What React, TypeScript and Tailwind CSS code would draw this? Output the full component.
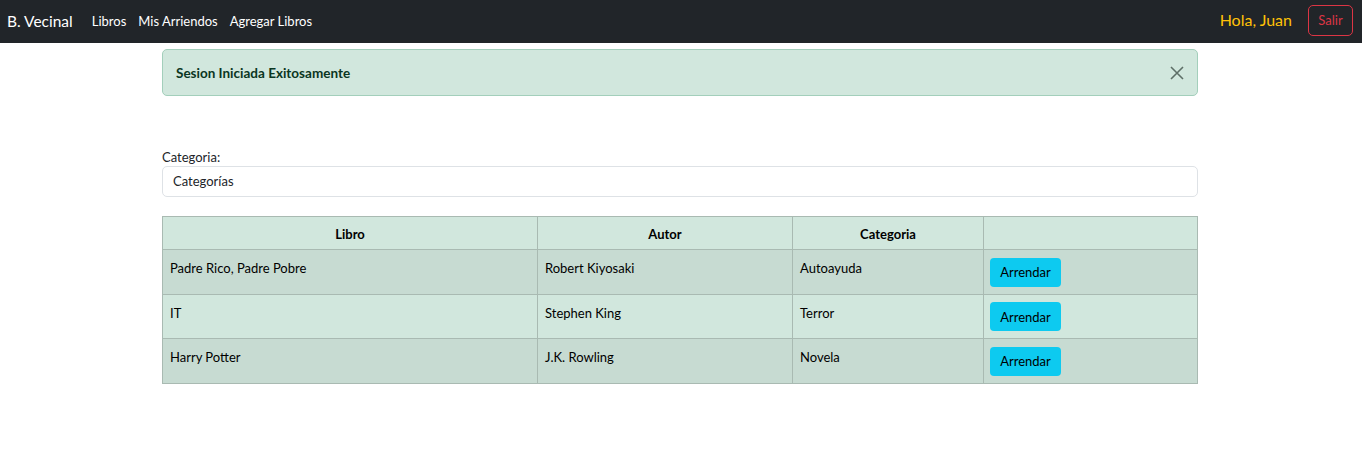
import React from "react";

const rows = [
  ["Padre Rico, Padre Pobre", "Robert Kiyosaki", "Autoayuda"],
  ["IT", "Stephen King", "Terror"],
  ["Harry Potter", "J.K. Rowling", "Novela"],
];

export default function App() {
  return (
    <div className="min-h-[460px] bg-white text-[13px] text-[#212529]" style={{ fontFamily: 'Lato, "Open Sans", sans-serif' }}>
      <nav className="h-[43px] bg-[#212529] flex items-center pl-[7px] pr-[9px]">
        <span className="text-white text-[15.5px] mr-[19px]">B. Vecinal</span>
        <div className="flex gap-[12px] text-white text-[13px]">
          <span>Libros</span>
          <span>Mis Arriendos</span>
          <span>Agregar Libros</span>
        </div>
        <div className="ml-auto flex items-center">
          <span className="text-[#ffc107] text-[16px] mr-[16px] -mt-[4px]">Hola, Juan</span>
          <button className="h-[31px] w-[45px] border border-[#dc3545] rounded-[5px] text-[#dc3545] text-[13px] -mt-[2px]">Salir</button>
        </div>
      </nav>
      <div className="w-[1036px] ml-[162px] pt-[6px]">
        <div className="h-[47px] bg-[#d1e7dd] border border-[#a3cfbb] rounded-[5px] flex items-center pl-[13px] pr-[13px] text-[#0a3622] font-bold text-[13.5px]">
          <span className="mt-[2px]">Sesion Iniciada Exitosamente</span>
          <svg className="ml-auto" width="14" height="14" viewBox="0 0 14 14">
            <path d="M1 1L13 13M13 1L1 13" stroke="#5e6f67" strokeWidth="1.6" />
          </svg>
        </div>
        <div className="mt-[53px] text-[13px] leading-[16px]">Categoria:</div>
        <div className="mt-[1px] h-[31px] border border-[#dee2e6] rounded-[5px] flex items-center pl-[10px] text-[13px]">Categorías</div>
        <table className="mt-[19px] w-full border-collapse text-[13px] text-black">
          <thead>
            <tr className="bg-[#d1e7dd] h-[33px]">
              <th className="border border-[#a9bab2] w-[375px] font-bold pt-[3px]">Libro</th>
              <th className="border border-[#a9bab2] w-[255px] font-bold pt-[3px]">Autor</th>
              <th className="border border-[#a9bab2] w-[191px] font-bold pt-[3px]">Categoria</th>
              <th className="border border-[#a9bab2]"></th>
            </tr>
          </thead>
          <tbody>
            {rows.map((r, i) => (
              <tr key={i} className={i % 2 === 0 ? "bg-[#c7dbd2] h-[45px]" : "bg-[#d1e7dd] h-[44px]"}>
                {r.map((c, j) => (
                  <td key={j} className="border border-[#a9bab2] align-top px-[7px] pt-[9px] leading-[18px]">{c}</td>
                ))}
                <td className="border border-[#a9bab2] px-[6px] py-[7px]">
                  <button className="bg-[#0dcaf0] rounded-[4px] h-[29px] w-[71px] pt-[2px] text-[13px] text-black">Arrendar</button>
                </td>
              </tr>
            ))}
          </tbody>
        </table>
      </div>
    </div>
  );
}
